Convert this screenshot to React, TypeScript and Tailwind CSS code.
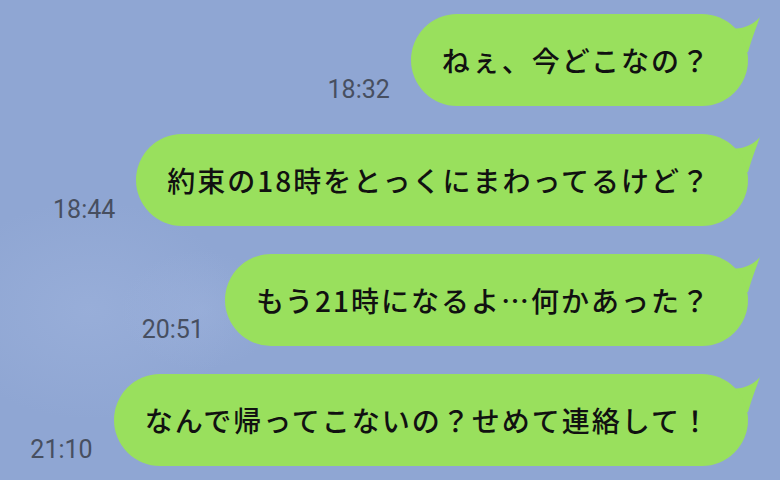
import React from "react";

const messages = [
  { text: "ねぇ、今どこなの？", time: "18:32" },
  { text: "約束の18時をとっくにまわってるけど？", time: "18:44" },
  { text: "もう21時になるよ…何かあった？", time: "20:51" },
  { text: "なんで帰ってこないの？せめて連絡して！", time: "21:10" },
];

function Tail() {
  return (
    <svg
      className="absolute -right-[14px] top-[2px]"
      width="30"
      height="40"
      viewBox="0 0 30 40"
    >
      <path
        d="M0 12 C 8 14, 20 10, 28 1 C 24 12, 20 22, 16 36 L 0 36 Z"
        fill="#99e05d"
      />
    </svg>
  );
}

export default function App() {
  return (
    <div className="relative w-[780px] h-[480px] overflow-hidden bg-[#8fa6d3]">
      <div className="absolute left-[-60px] top-[200px] w-[300px] h-[220px] rounded-full bg-[radial-gradient(closest-side,rgba(165,185,225,0.4),rgba(165,185,225,0))]" />
      <div className="absolute left-[120px] top-[250px] w-[160px] h-[120px] rounded-full bg-[radial-gradient(closest-side,rgba(165,185,225,0.3),rgba(165,185,225,0))]" />
      <div className="relative flex flex-col items-end gap-[28px] pt-[14px] pr-[32px]">
        {messages.map((m) => (
          <div key={m.time} className="flex items-end gap-[21px]">
            <span className="mb-[4px] text-[25px] leading-none text-[#474f60] font-['Roboto','Liberation_Sans',sans-serif]">
              {m.time}
            </span>
            <div className="relative">
              <Tail />
              <div className="relative flex h-[92px] items-center rounded-[46px] bg-[#99e05d] pl-[31px] pr-[37px] text-[28px] tracking-[2px] font-medium text-[#111111] font-['Noto_Sans_CJK_JP',sans-serif]">
                {m.text}
              </div>
            </div>
          </div>
        ))}
      </div>
    </div>
  );
}
